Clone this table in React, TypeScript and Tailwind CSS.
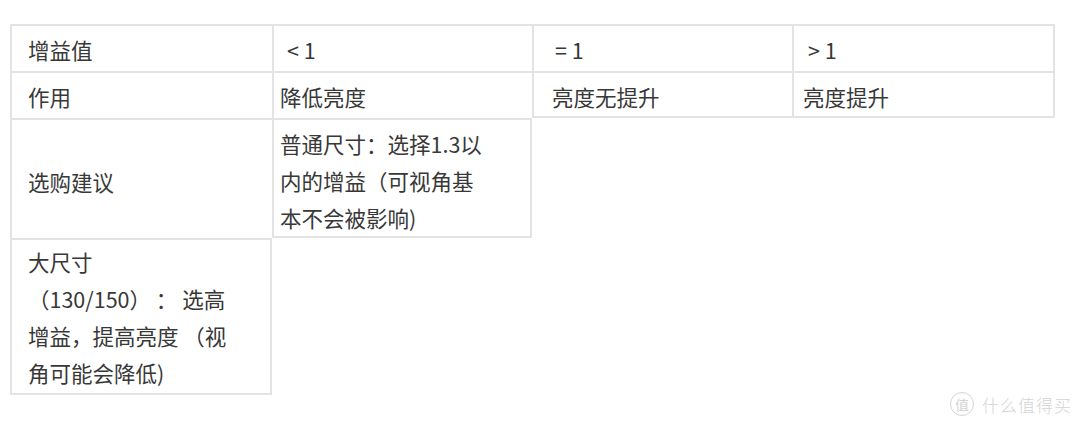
import React from 'react';

const font = { fontFamily: '"Noto Sans CJK SC", "Noto Sans", sans-serif' };

const App: React.FC = () => {
    // cell borders: shared lines are drawn by the left/top cell edges
    const line = 'border-[#e3e3e3]';

    return (
        <div className="relative w-[1080px] h-[423px] bg-white text-[#383838] overflow-hidden" style={font}>
            <div className="pt-[24px] pl-[10px]">
                <div className="grid grid-cols-[262px_260px_260px_263px] grid-rows-[47px_47px_120px_157px] text-[21.5px] leading-[37px]">
                    {/* Row 1 */}
                    <div className={`border-l-2 border-t-2 ${line} flex items-center pl-4 pt-[2px]`}>增益值</div>
                    <div className={`border-l-2 border-t-2 ${line} flex items-center pl-[13px] pt-[2px]`}>&lt; 1</div>
                    <div className={`border-l-2 border-t-2 ${line} flex items-center pl-[21px] pt-[2px]`}>= 1</div>
                    <div className={`border-l-2 border-t-2 border-r-2 ${line} flex items-center pl-[14px] pt-[2px]`}>&gt; 1</div>

                    {/* Row 2 */}
                    <div className={`border-l-2 border-t-2 ${line} flex items-center pl-4 pt-[2px]`}>作用</div>
                    <div className={`border-l-2 border-t-2 ${line} flex items-center pl-[6px] pt-[2px]`}>降低亮度</div>
                    <div className={`border-l-2 border-t-2 border-b-2 ${line} flex items-center pl-[18px] pt-[4px]`}>亮度无提升</div>
                    <div className={`border-l-2 border-t-2 border-r-2 border-b-2 ${line} flex items-center pl-[9px] pt-[4px]`}>亮度提升</div>

                    {/* Row 3 */}
                    <div className={`border-l-2 border-t-2 ${line} flex items-center pl-4 pt-1`}>选购建议</div>
                    <div className={`border-l-2 border-t-2 border-r-2 border-b-2 ${line} flex items-center pl-[6px] pt-[4px]`}>
                        <p>
                            普通尺寸：选择1.3以<br />
                            内的增益（可视角基<br />
                            本不会被影响)
                        </p>
                    </div>
                    <div />
                    <div />

                    {/* Row 4 */}
                    <div className={`border-l-2 border-t-2 border-r-2 border-b-2 ${line} flex items-center pl-4`}>
                        <p>
                            大尺寸<br />
                            （130/150） ：  选高<br />
                            增益，提高亮度 （视<br />
                            角可能会降低)
                        </p>
                    </div>
                </div>
            </div>

            {/* Watermark */}
            <div className="absolute left-[950px] top-[392px] flex items-center gap-[8px] text-[#d4d4d4]">
                <span className="w-[24px] h-[24px] rounded-full border border-[#d4d4d4] flex items-center justify-center text-[14px] leading-none">值</span>
                <span className="text-[17px] leading-none font-light tracking-[1px]">什么值得买</span>
            </div>
        </div>
    );
};

export default App;
